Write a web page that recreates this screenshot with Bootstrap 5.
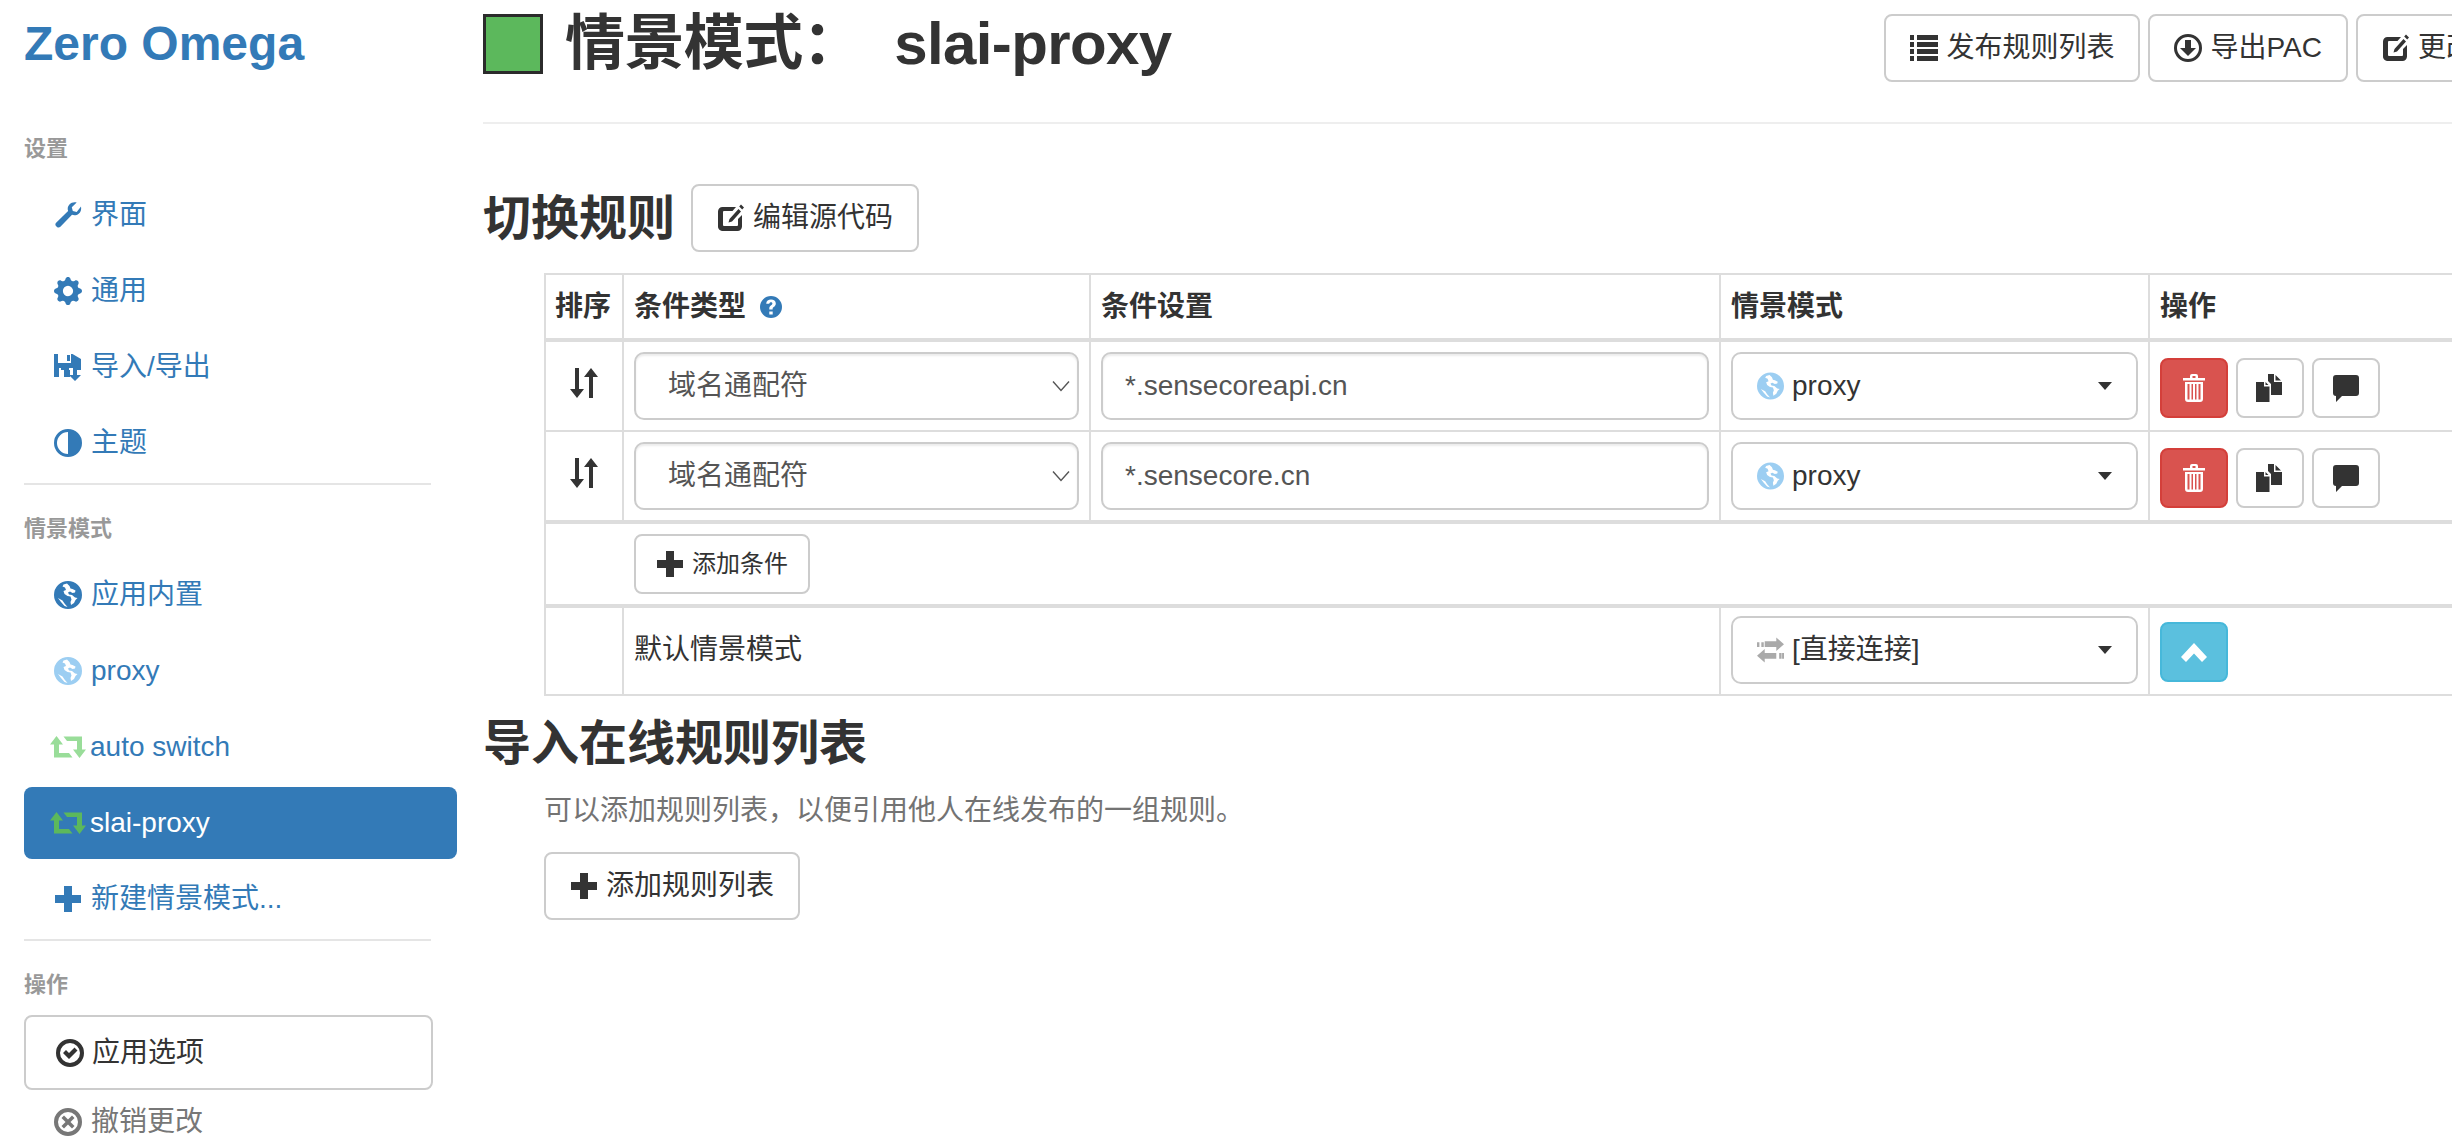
<!DOCTYPE html>
<html lang="zh-CN">
<head>
<meta charset="utf-8">
<title>Zero Omega</title>
<link href="https://cdn.jsdelivr.net/npm/bootstrap@5.3.0/dist/css/bootstrap.min.css" rel="stylesheet">
<style>
html,body{height:1146px;overflow:hidden}
body{--bs-body-font-size:28px;--bs-body-line-height:40px;--bs-body-color:#333;font-family:"Liberation Sans","Noto Sans CJK SC",sans-serif;font-size:28px;line-height:40px;color:#333;width:2452px}
.ic{width:28px;height:28px;fill:currentColor;flex:none;display:inline-block}
.side{width:433px;margin-left:24px;flex:none;margin-right:26px}
.brand{font-size:48px;line-height:56px;font-weight:700;color:#337ab7;margin:16px 0 0;height:117px}
.sec-h{font-size:22px;line-height:32px;font-weight:700;color:#999;margin:0}
.side .nav{gap:4px;margin-top:14px;--bs-nav-link-color:#337ab7;--bs-nav-link-hover-color:#23527c}
.side .nav-link{--bs-nav-pills-border-radius:8px;display:flex;align-items:center;height:72px;padding:0 0 0 30px;font-size:28px;border-radius:8px;color:#337ab7}
.side .nav-link.active{background:#337ab7;color:#fff}
.side .nav-link .ic{margin-right:9px}
.side .nav-link .ic.rt{width:36px;height:22px;margin-left:-4px;margin-right:4px}
.sep{height:2px;background:#e5e5e5;width:407px}
.light-blue{color:#9ccef2}
.light-green{color:#99dd99}
.green{color:#5cb85c}
.side-btn{width:409px;height:75px;display:flex!important;align-items:center;padding-left:30px!important;margin-top:14px}
.side-btn .ic{margin-right:10px}
.undo{display:flex;align-items:center;color:#777;padding-left:30px;margin-top:12px;height:40px}
.undo .ic{margin-right:9px}
.btn-dflt{--bs-btn-color:#333;--bs-btn-bg:#fff;--bs-btn-border-color:#ccc;--bs-btn-hover-color:#333;--bs-btn-hover-bg:#e6e6e6;--bs-btn-hover-border-color:#adadad;--bs-btn-font-size:28px;--bs-btn-line-height:40px;--bs-btn-padding-x:24px;--bs-btn-padding-y:12px;--bs-btn-border-radius:8px;--bs-btn-border-width:2px;display:inline-flex;align-items:center;white-space:nowrap}
.btn-dflt .ic{margin-right:8px}
.btn-tiny{--bs-btn-font-size:24px;--bs-btn-line-height:36px;--bs-btn-padding-x:20px;--bs-btn-padding-y:10px}
.btn-act{width:68px;height:60px;padding:0;display:inline-flex;align-items:center;justify-content:center;--bs-btn-border-radius:8px;--bs-btn-border-width:2px}
.btn-act .ic{margin:0}
.btn-red{--bs-btn-color:#fff;--bs-btn-bg:#d9534f;--bs-btn-border-color:#d43f3a;--bs-btn-hover-color:#fff;--bs-btn-hover-bg:#c9302c;--bs-btn-hover-border-color:#ac2925}
.btn-cyan{--bs-btn-color:#fff;--bs-btn-bg:#5bc0de;--bs-btn-border-color:#46b8da;--bs-btn-hover-color:#fff;--bs-btn-hover-bg:#31b0d5;--bs-btn-hover-border-color:#269abc}
.main{width:2073px;flex:none}
.page-top{height:124px;padding-top:14px;border-bottom:2px solid #eee;align-items:flex-start}
.swatch{width:60px;height:60px;background:#5cb85c;border:3px solid #2b2b2b;flex:none;margin-right:22px}
.ttl{font-family:"Liberation Sans","Noto Sans CJK SC",sans-serif;font-size:60px;line-height:60px;font-weight:700;margin:0;color:#333;letter-spacing:-.6px;white-space:pre}
.head-h{font-size:48px;line-height:53px;font-weight:700;margin:0;color:#333;white-space:nowrap}
.sw-row{margin-top:60px;gap:16px}
table.rules{width:2012px;margin:21px 0 0 61px;table-layout:fixed;border-collapse:separate;border-spacing:0;border-top:2px solid #ddd;border-left:2px solid #ddd;color:#333}
.rules>:not(caption)>*>*{padding:10px;border:0;border-right:2px solid #ddd;border-bottom:2px solid #ddd;box-shadow:none;vertical-align:middle;font-size:28px;line-height:40px;background:#fff}
.rules>thead>tr>th{height:67px;border-bottom-width:4px;font-weight:700;padding-top:8px;padding-bottom:8px;white-space:nowrap}
.rules>tbody>tr.last>td{border-bottom-width:4px}
.rules>tbody>tr.add>td{border-bottom-width:4px;padding-left:88px;border-right:0}
.rules>tbody>tr.dflt>td{padding-top:8px;padding-bottom:10px}
.rules .th-sort{padding-left:9px;padding-right:0}
.sort-ic{width:28px;height:30px;display:block;margin:-6px auto 0 14px}
.help{width:22px;height:22px;color:#337ab7;margin-left:6px;vertical-align:-2px}
.fld{height:68px;border:2px solid #ccc;border-radius:10px;font-size:28px;line-height:40px;color:#555;box-shadow:inset 0 2px 2px rgba(0,0,0,.08)}
.form-select.fld{padding:0 40px 0 32px;background-size:20px 12px;background-position:right 6px center;background-image:url("data:image/svg+xml,%3csvg xmlns='http://www.w3.org/2000/svg' viewBox='0 0 20 12'%3e%3cpath fill='none' stroke='%23555' stroke-width='1.4' d='M2 1.5l8 9 8-9'/%3e%3c/svg%3e")}
.form-control.fld{padding:0 22px}
.pick{height:68px;width:100%;--bs-btn-padding-x:24px;--bs-btn-padding-y:0;--bs-btn-border-radius:10px;justify-content:flex-start}
.pick .ic{width:27px;height:28px;margin-right:8px}
.pick.dropdown-toggle::after{margin-left:auto;border-top:.3em solid;border-right:.27em solid transparent;border-left:.27em solid transparent;border-bottom:0}
.gray{color:#aaa}
.acts{gap:8px;padding-top:3px}
.rl-h{margin-top:21px;line-height:54px}
.hint{margin:20px 0 0 61px;color:#737373;font-size:28px;line-height:40px}
.add-list{margin:21px 0 0 61px}
</style>
</head>
<body class="d-flex">
<svg width="0" height="0" class="position-absolute" aria-hidden="true">
<defs>
<symbol id="i-wrench" viewBox="0 0 28 28"><path d="M27 5.4c.6 3-.3 5.7-2.300 7.300-2 1.600-4.500 1.900-6.700 1L6.400 25.800c-1 1-2.500 1-3.400.2l-1-1c-.9-1-.8-2.400.1-3.300L14.100 10c-.8-2.300-.4-4.800 1.300-6.600C17.300 1.500 20 .8 22.700 1.500L17.800 6.300l1 3.800 3.900 1z"/></symbol>
<symbol id="i-cog" viewBox="0 0 16 16"><path fill-rule="evenodd" d="M9.405 1.05c-.413-1.4-2.397-1.4-2.81 0l-.1.34a1.464 1.464 0 0 1-2.105.872l-.31-.17c-1.283-.698-2.686.705-1.987 1.987l.169.311c.446.82.023 1.841-.872 2.105l-.34.1c-1.4.413-1.4 2.397 0 2.81l.34.1a1.464 1.464 0 0 1 .872 2.105l-.17.31c-.698 1.283.705 2.686 1.987 1.987l.311-.169a1.464 1.464 0 0 1 2.105.872l.1.34c.413 1.4 2.397 1.4 2.81 0l.1-.34a1.464 1.464 0 0 1 2.105-.872l.31.17c1.283.698 2.686-.705 1.987-1.987l-.169-.311a1.464 1.464 0 0 1 .872-2.105l.34-.1c1.4-.413 1.400-2.397 0-2.810l-.34-.1a1.464 1.464 0 0 1-.872-2.105l.17-.31c.698-1.283-.705-2.686-1.987-1.987l-.311.169a1.464 1.464 0 0 1-2.105-.872l-.1-.34zM8 10.930a2.929 2.929 0 1 1 0-5.860 2.929 2.929 0 0 1 0 5.860z"/></symbol>
<symbol id="i-save" viewBox="0 0 28 28"><path fill-rule="evenodd" d="M0 1h4v9h13V1h1.500L27 6v11h-6v-2h-6v2h1v7h-6v-7H7v-2H5v9H0zM13 2h3v6h-3z"/><path d="M20 15h4v7h4l-6 6-6-6h4z" transform="translate(-1 0)"/></symbol>
<symbol id="i-adjust" viewBox="0 0 28 28"><path fill-rule="evenodd" d="M14 0a14 14 0 1 1 0 28a14 14 0 0 1 0-28zm0 3v22a11 11 0 0 0 0-22z" transform="matrix(-1 0 0 1 28 0)"/></symbol>
<symbol id="i-globe" viewBox="0 0 28 28"><path fill-rule="evenodd" d="M14 0a14 14 0 1 1 0 28a14 14 0 0 1 0-28zM13 2.500l-3.500 1-1 2 2.500 1 1 2.500-2.500 1 1 3 3 2 3 .5 1 3-1 2.500 .5 3 3-2 1.500-3 2-2-2.500-.5-3-2.500-3-.5-1-2 2-1 2.500 1.500 2.500-.5.5-2-3-1.500-2-.5-1-2.500zM4 17l3 4 3.500 4 3 1-3-3.500-2-3z"/></symbol>
<symbol id="i-retweet" viewBox="0 0 36 22"><path d="M6.500 0L13 8.500H9V17H19L22.500 21.500H4V8.500H0Z"/><path d="M29.500 22L23 13.500H27V5H17L13.500 .5H32V13.500H36Z"/></symbol>
<symbol id="i-plus" viewBox="0 0 28 28"><path d="M10 1h8v9h9v8h-9v9h-8v-9H1v-8h9z"/></symbol>
<symbol id="i-ok" viewBox="0 0 28 28"><path fill-rule="evenodd" d="M14 0a14 14 0 1 1 0 28a14 14 0 0 1 0-28zm0 4a10 10 0 1 0 0 20a10 10 0 0 0 0-20z"/><path d="M7 14l3-3 3 3 5.500-5.500 3 3-8.500 8.500z"/></symbol>
<symbol id="i-x" viewBox="0 0 28 28"><path fill-rule="evenodd" d="M14 0a14 14 0 1 1 0 28a14 14 0 0 1 0-28zm0 4a10 10 0 1 0 0 20a10 10 0 0 0 0-20z"/><path d="M10 7.500l4 4 4-4 2.500 2.500-4 4 4 4-2.500 2.500-4-4-4 4L7.500 18l4-4-4-4z"/></symbol>
<symbol id="i-edit" viewBox="0 0 28 28"><path d="M5.500 3H19l-3.500 4H7a1 1 0 0 0-1 1v13a1 1 0 0 0 1 1h13a1 1 0 0 0 1-1v-6l4-4v11.500c0 2.500-2 4.500-4.500 4.500h-14C3 27 1 25 1 22.500v-15C1 5 3 3 5.500 3z"/><path d="M21.500 5l2.500 2.500-9 10-3.500 1 1-3.500zM24 .5l3 3-1.800 2L22.200 2.500z"/></symbol>
<symbol id="i-help" viewBox="0 0 22 22"><path fill-rule="evenodd" d="M11 0a11 11 0 1 1 0 22a11 11 0 0 1 0-22zM9.300 15.500v3h3.400v-3zM11 3.500c-2.700 0-4.600 1.400-4.800 4.200h3.100c.1-1 .7-1.500 1.600-1.500s1.500.5 1.500 1.300c0 .8-.6 1.300-1.300 1.800-1.300 1-1.800 1.800-1.800 3.200v1h3.300v-.7c0-.8.4-1.200 1.100-1.700 1.200-.9 2.100-1.900 2.100-3.600C15.800 5 13.800 3.500 11 3.500z"/></symbol>
<symbol id="i-list" viewBox="0 0 28 28"><path d="M0 1h4v5H0zM7 1h21v5H7zM0 8h4v5H0zM7 8h21v5H7zM0 15h4v5H0zM7 15h21v5H7zM0 22h4v5H0zM7 22h21v5H7z"/></symbol>
<symbol id="i-down" viewBox="0 0 28 28"><path fill-rule="evenodd" d="M14 0a14 14 0 1 1 0 28a14 14 0 0 1 0-28zm0 3a11 11 0 1 0 0 22a11 11 0 0 0 0-22z"/><path d="M11 6h6v8h5l-8 8-8-8h5z"/></symbol>
<symbol id="i-sort" viewBox="0 0 28 30"><path d="M5 0h4v21h5l-7 9-7-9h5zM19 30h4V9h5L21 0l-7 9h5z"/></symbol>
<symbol id="i-trash" viewBox="0 0 28 28"><path fill-rule="evenodd" d="M3 4h7V2a2 2 0 0 1 2-2h4a2 2 0 0 1 2 2v2h7v2.500H3zM12.500 2v2h3V2zM5 8h18v17a3 3 0 0 1-3 3H8a3 3 0 0 1-3-3zm2.500 2v15.500h2V10zm4 0v15.500h1.500V10zm3.500 0v15.500h1.500V10zm3.500 0v15.500h2V10z"/></symbol>
<symbol id="i-dup" viewBox="0 0 28 28"><path d="M0 8h8v4.500l5.500 0V28H0zM9.500 8v3h3z"/><path d="M12 0h6v8h8v13H15V10l-3-3zM19.500 1v5.500H25z"/></symbol>
<symbol id="i-comment" viewBox="0 0 28 28"><path d="M4 1h20a3 3 0 0 1 3 3v15a3 3 0 0 1-3 3H10l-6 6v-6a3 3 0 0 1-3-3V4a3 3 0 0 1 3-3z"/></symbol>
<symbol id="i-transfer" viewBox="0 0 28 28"><path d="M20 1l8 7-8 7v-4H8V5h12zM0 6h2.500v5H0zM4.500 6H7v5H4.500zM8 13v4H20v6H8v4l-8-7zM23 17h2.500v6H23zM21 0z"/><path d="M26 17h2v6h-2z"/></symbol>
<symbol id="i-up" viewBox="0 0 28 28"><path d="M14 5l13 14-5 5-8-8.500L6 24l-5-5z"/></symbol>
</defs>
</svg>

<aside class="side">
  <h1 class="brand">Zero Omega</h1>
  <h6 class="sec-h">设置</h6>
  <div class="nav nav-pills flex-column">
    <a class="nav-link" href="#"><svg class="ic"><use href="#i-wrench"/></svg>界面</a>
    <a class="nav-link" href="#"><svg class="ic"><use href="#i-cog"/></svg>通用</a>
    <a class="nav-link" href="#"><svg class="ic"><use href="#i-save"/></svg>导入/导出</a>
    <a class="nav-link" href="#"><svg class="ic"><use href="#i-adjust"/></svg>主题</a>
  </div>
  <div class="sep mt-1"></div>
  <h6 class="sec-h mt-4 pt-1">情景模式</h6>
  <div class="nav nav-pills flex-column">
    <a class="nav-link" href="#"><svg class="ic"><use href="#i-globe"/></svg>应用内置</a>
    <a class="nav-link" href="#"><svg class="ic light-blue"><use href="#i-globe"/></svg>proxy</a>
    <a class="nav-link" href="#"><svg class="ic rt light-green"><use href="#i-retweet"/></svg>auto switch</a>
    <a class="nav-link active" href="#"><svg class="ic rt green"><use href="#i-retweet"/></svg>slai-proxy</a>
    <a class="nav-link" href="#"><svg class="ic"><use href="#i-plus"/></svg>新建情景模式...</a>
  </div>
  <div class="sep mt-1"></div>
  <h6 class="sec-h mt-4 pt-1">操作</h6>
  <a class="btn btn-dflt side-btn" href="#"><svg class="ic"><use href="#i-ok"/></svg>应用选项</a>
  <div class="undo"><svg class="ic"><use href="#i-x"/></svg>撤销更改</div>
</aside>

<main class="main">
  <div class="page-top d-flex">
    <span class="swatch"></span>
    <h1 class="ttl">情景模式：  slai-proxy</h1>
    <div class="d-flex ms-auto gap-2">
      <a class="btn btn-dflt" href="#"><svg class="ic"><use href="#i-list"/></svg>发布规则列表</a>
      <a class="btn btn-dflt" href="#"><svg class="ic"><use href="#i-down"/></svg>导出PAC</a>
      <a class="btn btn-dflt" href="#"><svg class="ic"><use href="#i-edit"/></svg>更改名称</a>
    </div>
  </div>

  <div class="d-flex align-items-center sw-row">
    <h3 class="head-h">切换规则</h3>
    <a class="btn btn-dflt" href="#"><svg class="ic"><use href="#i-edit"/></svg>编辑源代码</a>
  </div>

  <table class="table rules">
    <colgroup><col style="width:78px"><col style="width:467px"><col style="width:630px"><col style="width:429px"><col></colgroup>
    <thead>
      <tr>
        <th class="th-sort">排序</th>
        <th>条件类型 <svg class="ic help"><use href="#i-help"/></svg></th>
        <th>条件设置</th>
        <th>情景模式</th>
        <th>操作</th>
      </tr>
    </thead>
    <tbody>
      <tr>
        <td><svg class="ic sort-ic"><use href="#i-sort"/></svg></td>
        <td><select class="form-select fld"><option>域名通配符</option></select></td>
        <td><input class="form-control fld" value="*.sensecoreapi.cn"></td>
        <td><button class="btn btn-dflt pick dropdown-toggle" type="button"><svg class="ic light-blue"><use href="#i-globe"/></svg>proxy</button></td>
        <td><div class="d-flex acts">
          <button class="btn btn-act btn-red" type="button"><svg class="ic"><use href="#i-trash"/></svg></button>
          <button class="btn btn-act btn-dflt" type="button"><svg class="ic"><use href="#i-dup"/></svg></button>
          <button class="btn btn-act btn-dflt" type="button"><svg class="ic"><use href="#i-comment"/></svg></button>
        </div></td>
      </tr>
      <tr class="last">
        <td><svg class="ic sort-ic"><use href="#i-sort"/></svg></td>
        <td><select class="form-select fld"><option>域名通配符</option></select></td>
        <td><input class="form-control fld" value="*.sensecore.cn"></td>
        <td><button class="btn btn-dflt pick dropdown-toggle" type="button"><svg class="ic light-blue"><use href="#i-globe"/></svg>proxy</button></td>
        <td><div class="d-flex acts">
          <button class="btn btn-act btn-red" type="button"><svg class="ic"><use href="#i-trash"/></svg></button>
          <button class="btn btn-act btn-dflt" type="button"><svg class="ic"><use href="#i-dup"/></svg></button>
          <button class="btn btn-act btn-dflt" type="button"><svg class="ic"><use href="#i-comment"/></svg></button>
        </div></td>
      </tr>
      <tr class="add">
        <td colspan="5"><a class="btn btn-dflt btn-tiny" href="#"><svg class="ic"><use href="#i-plus"/></svg>添加条件</a></td>
      </tr>
      <tr class="dflt">
        <td></td>
        <td colspan="2">默认情景模式</td>
        <td><button class="btn btn-dflt pick dropdown-toggle" type="button"><svg class="ic gray"><use href="#i-transfer"/></svg>[直接连接]</button></td>
        <td><div class="d-flex acts"><button class="btn btn-act btn-cyan" type="button"><svg class="ic"><use href="#i-up"/></svg></button></div></td>
      </tr>
    </tbody>
  </table>

  <h3 class="head-h rl-h">导入在线规则列表</h3>
  <p class="hint">可以添加规则列表，以便引用他人在线发布的一组规则。</p>
  <a class="btn btn-dflt add-list" href="#"><svg class="ic"><use href="#i-plus"/></svg>添加规则列表</a>
</main>
<script src="https://cdn.jsdelivr.net/npm/bootstrap@5.3.0/dist/js/bootstrap.bundle.min.js"></script>
</body>
</html>
